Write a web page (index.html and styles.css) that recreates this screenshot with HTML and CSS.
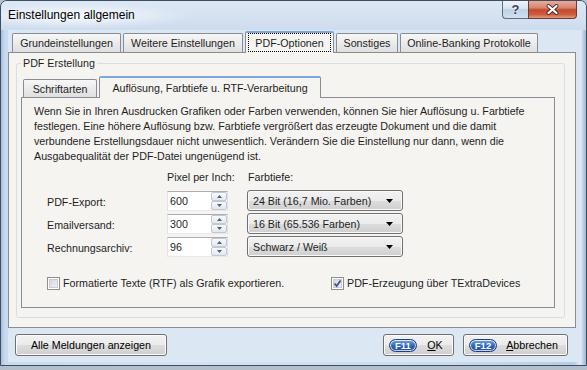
FILE: index.html
```html
<!DOCTYPE html>
<html lang="de">
<head>
    <meta charset="UTF-8">
    <meta name="viewport" content="width=device-width, initial-scale=1.0">
    <title>Einstellungen allgemein</title>
    <link rel="stylesheet" href="styles.css">
</head>
<body>

    <div class="window">
        <!-- Title bar -->
        <div class="titlebar">
            <span class="title">Einstellungen allgemein</span>
            <div class="caption-buttons">
                <span class="cap-btn cap-help">?</span>
                <span class="cap-btn cap-close">
                    <svg width="13" height="11" viewBox="0 0 13 11">
                        <path d="M2.5 2 L10.5 9 M10.5 2 L2.5 9" stroke="#4a2620" stroke-width="3.8" stroke-linecap="round"/>
                        <path d="M2.5 2 L10.5 9 M10.5 2 L2.5 9" stroke="#fff" stroke-width="2.2" stroke-linecap="round"/>
                    </svg>
                </span>
            </div>
        </div>

        <div class="client">
            <!-- Main tabs -->
            <div class="tab-strip main-tabs">
                <div class="tab tab-basic">Grundeinstellungen</div>
                <div class="tab tab-more">Weitere Einstellungen</div>
                <div class="tab tab-pdf active"><span class="focus">PDF-Optionen</span></div>
                <div class="tab tab-misc">Sonstiges</div>
                <div class="tab tab-banking">Online-Banking Protokolle</div>
            </div>

            <div class="tab-page">
                <fieldset class="group">
                    <legend>PDF Erstellung</legend>

                    <!-- Inner tabs -->
                    <div class="tab-strip sub-tabs">
                        <div class="tab tab-fonts">Schriftarten</div>
                        <div class="tab tab-resolution active">Auflösung, Farbtiefe u. RTF-Verarbeitung</div>
                    </div>

                    <div class="sub-page">
                        <p class="intro">Wenn Sie in Ihren Ausdrucken Grafiken oder Farben verwenden, können Sie hier Auflösung u. Farbtiefe<br>
                        festlegen. Eine höhere Auflösung bzw. Farbtiefe vergrößert das erzeugte Dokument und die damit<br>
                        verbundene Erstellungsdauer nicht unwesentlich. Verändern Sie die Einstellung nur dann, wenn die<br>
                        Ausgabequalität der PDF-Datei ungenügend ist.</p>

                        <div class="params">
                            <span></span>
                            <span class="head">Pixel per Inch:</span>
                            <span class="head head-depth">Farbtiefe:</span>

                            <span class="label">PDF-Export:</span>
                            <div class="spin">
                                <span class="spin-value">600</span>
                                <div class="spin-buttons">
                                    <span class="spin-btn"><svg width="5" height="3" viewBox="0 0 5 3"><polygon points="0,3 5,3 2.5,0" fill="#4d6185"/></svg></span>
                                    <span class="spin-btn"><svg width="5" height="3" viewBox="0 0 5 3"><polygon points="0,0 5,0 2.5,3" fill="#4d6185"/></svg></span>
                                </div>
                            </div>
                            <div class="combo">
                                <span>24 Bit (16,7 Mio. Farben)</span>
                                <svg width="7" height="4" viewBox="0 0 7 4"><polygon points="0,0 7,0 3.5,4" fill="#000"/></svg>
                            </div>

                            <span class="label">Emailversand:</span>
                            <div class="spin">
                                <span class="spin-value">300</span>
                                <div class="spin-buttons">
                                    <span class="spin-btn"><svg width="5" height="3" viewBox="0 0 5 3"><polygon points="0,3 5,3 2.5,0" fill="#4d6185"/></svg></span>
                                    <span class="spin-btn"><svg width="5" height="3" viewBox="0 0 5 3"><polygon points="0,0 5,0 2.5,3" fill="#4d6185"/></svg></span>
                                </div>
                            </div>
                            <div class="combo">
                                <span>16 Bit (65.536 Farben)</span>
                                <svg width="7" height="4" viewBox="0 0 7 4"><polygon points="0,0 7,0 3.5,4" fill="#000"/></svg>
                            </div>

                            <span class="label">Rechnungsarchiv:</span>
                            <div class="spin">
                                <span class="spin-value">96</span>
                                <div class="spin-buttons">
                                    <span class="spin-btn"><svg width="5" height="3" viewBox="0 0 5 3"><polygon points="0,3 5,3 2.5,0" fill="#4d6185"/></svg></span>
                                    <span class="spin-btn"><svg width="5" height="3" viewBox="0 0 5 3"><polygon points="0,0 5,0 2.5,3" fill="#4d6185"/></svg></span>
                                </div>
                            </div>
                            <div class="combo">
                                <span>Schwarz / Weiß</span>
                                <svg width="7" height="4" viewBox="0 0 7 4"><polygon points="0,0 7,0 3.5,4" fill="#000"/></svg>
                            </div>
                        </div>

                        <div class="options">
                            <label class="option">
                                <span class="check"></span>
                                Formatierte Texte (RTF) als Grafik exportieren.
                            </label>
                            <label class="option">
                                <span class="check checked">
                                    <svg width="9" height="9" viewBox="0 0 9 9"><path d="M1.5 4.5 L3.6 7 L7.6 1.5" fill="none" stroke="#3b4f92" stroke-width="1.7"/></svg>
                                </span>
                                PDF-Erzeugung über TExtraDevices
                            </label>
                        </div>
                    </div>
                </fieldset>
            </div>

            <!-- Footer buttons -->
            <div class="footer">
                <button class="btn btn-messages">Alle Meldungen anzeigen</button>
                <div class="footer-right">
                    <button class="btn btn-key btn-ok"><span class="key">F11</span><span class="btn-label"><u>O</u>K</span></button>
                    <button class="btn btn-key btn-cancel"><span class="key">F12</span><span class="btn-label"><u>A</u>bbrechen</span></button>
                </div>
            </div>
        </div>
    </div>

</body>
</html>
```

FILE: styles.css
```css
* {
    box-sizing: border-box;
}

body {
    margin: 0;
    width: 587px;
    height: 370px;
    overflow: hidden;
    background: #b4bfcc;
    font-family: "Liberation Sans", Arial, sans-serif;
    font-size: 10.7px;
    color: #1e1e1e;
}

/* Window frame */
.window {
    height: 366px;
    display: flex;
    flex-direction: column;
    border: 1px solid #3f4d5f;
    border-radius: 7px 7px 0 0;
    background: linear-gradient(90deg, #a6bfdd 0, #c8daee 4px, #d4e2f3 30%, #cbdcf0 75%, #b8cde7 98%, #e3edf8 99%, #9cb6d6 100%);
}

.titlebar {
    height: 29px;
    flex-shrink: 0;
    display: flex;
    justify-content: space-between;
    align-items: flex-start;
    border-radius: 6px 6px 0 0;
    background:
        radial-gradient(ellipse 120px 13px at 72px 15px, rgba(255, 255, 255, 0.85), rgba(255, 255, 255, 0)),
        linear-gradient(#dde8f5, #cddcee);
}

.title {
    margin: 6px 0 0 7px;
    font-size: 12px;
    line-height: 16px;
    color: #000;
}

.caption-buttons {
    display: flex;
    margin-right: 9px;
}

.cap-btn {
    height: 18px;
    display: flex;
    align-items: center;
    justify-content: center;
    border: 1px solid #5e6e84;
    border-top: none;
}

.cap-help {
    width: 26px;
    border-right: none;
    border-radius: 0 0 0 4px;
    background: linear-gradient(#eef3f9, #d8e3f0 45%, #bfd0e4 50%, #d0e0f1);
    color: #34445c;
    font-size: 13px;
    font-weight: bold;
    text-shadow: 0 0 3px #fff;
}

.cap-close {
    width: 49px;
    border-color: #6a3b35;
    border-radius: 0 0 4px 0;
    background: linear-gradient(#e9ab9a, #d88571 40%, #c2492e 52%, #cf5e3f 80%, #e59c7e);
}

/* Client area */
.client {
    flex: 1;
    margin: 0 8px 3px 7px;
    display: flex;
    flex-direction: column;
    background: #dce7f4;
}

/* Tabs */
.tab-strip {
    display: flex;
    align-items: flex-end;
    flex-shrink: 0;
}

.main-tabs {
    height: 22px;
    padding-left: 4px;
}

.tab {
    display: flex;
    align-items: center;
    justify-content: center;
    height: 19px;
    margin-right: 2px;
    border: 1px solid #898c95;
    border-bottom: none;
    border-radius: 2px 2px 0 0;
    background: linear-gradient(#f7f7f7, #ebebeb 50%, #dfdfdf);
    white-space: nowrap;
}

.tab.active {
    position: relative;
    z-index: 1;
    height: 22px;
    margin-bottom: -1px;
    border-top: 2px solid #7aa8da;
    background: #f5f4f1;
}

.tab-basic { width: 109px; }
.tab-more { width: 120px; }
.tab-pdf { width: 89px; }
.tab-misc { width: 62px; }
.tab-banking { width: 138px; }

.focus {
    align-self: stretch;
    flex: 1;
    display: flex;
    align-items: center;
    justify-content: center;
    margin: 0 2px 1px;
    border: 1px dotted #000;
}

.tab-page {
    height: 276px;
    margin-right: 2px;
    padding: 3px 10px 9px 7px;
    border: 1px solid #898c95;
    background: #f5f4f1;
}

/* Group box */
.group {
    margin: 0;
    min-width: 0;
    padding: 5px 9px 9px 4px;
    border: 1px solid #d5dfe5;
    border-radius: 3px;
}

.group legend {
    padding: 0 2px;
    line-height: 15px;
}

.sub-tabs {
    height: 21px;
    padding-left: 2px;
}

.sub-tabs .tab {
    height: 18px;
}

.sub-tabs .tab.active {
    height: 22px;
}

.tab-fonts { width: 74px; }
.tab-resolution { width: 222px; }

.sub-page {
    height: 211px;
    padding: 6px 0 0 12px;
    border: 1px solid #898c95;
    background: #f5f4f1;
}

.intro {
    margin: 0;
    line-height: 15px;
}

/* Resolution / colour depth grid */
.params {
    display: grid;
    grid-template-columns: 120px 80px 156px;
    grid-template-rows: 18px 21px 21px 21px;
    row-gap: 2px;
    margin: 6px 0 0 13px;
    align-items: center;
}

.params .head {
    align-self: start;
    line-height: 15px;
}

.head-depth {
    padding-left: 1px;
}

.label {
    padding-top: 2px;
}

.spin {
    display: flex;
    align-items: center;
    justify-content: space-between;
    width: 61px;
    height: 20px;
    padding: 0 0 0 2px;
    border: 1px solid;
    border-color: #abadb3 #dbdfe6 #e3e9ef #e2e3ea;
    background: #fff;
}

.spin-buttons {
    display: flex;
    flex-direction: column;
    width: 16px;
    height: 18px;
}

.spin-btn {
    flex: 1;
    display: flex;
    align-items: center;
    justify-content: center;
    border: 1px solid #c2c8d1;
    border-radius: 2px;
    background: linear-gradient(#f8f9fb, #e3e7ed);
}

.combo {
    display: flex;
    align-items: center;
    justify-content: space-between;
    height: 21px;
    padding: 0 9px 0 5px;
    border: 1px solid #707070;
    border-radius: 3px;
    background: linear-gradient(#f2f2f2, #ebebeb 50%, #dddddd 51%, #cfcfcf);
    box-shadow: inset 0 0 0 1px #fafafa;
    white-space: nowrap;
}

/* Checkboxes */
.options {
    display: flex;
    margin: 18px 0 0 13px;
    line-height: 16px;
}

.option {
    display: flex;
    align-items: center;
    gap: 3px;
}

.option:first-child {
    width: 284px;
}

.check {
    width: 13px;
    height: 13px;
    display: flex;
    align-items: center;
    justify-content: center;
    border: 1px solid #8e8f8f;
    background: linear-gradient(135deg, #cdd1d6, #f7f7f7);
    box-shadow: inset 0 0 0 1px #fff, inset 0 0 0 2px #c9ccd1;
}

/* Footer */
.footer {
    flex: 1;
    display: flex;
    justify-content: space-between;
    align-items: flex-start;
    padding: 6px 10px 0 7px;
}

.footer-right {
    display: flex;
    gap: 9px;
}

.btn {
    height: 22px;
    padding: 0;
    border: 1px solid #707070;
    border-radius: 3px;
    background: linear-gradient(#f2f2f2, #ebebeb 50%, #dddddd 51%, #cfcfcf);
    box-shadow: inset 0 0 0 1px #fcfcfc;
    font: inherit;
    color: #000;
}

.btn-messages { width: 152px; }
.btn-ok { width: 71px; }
.btn-cancel { width: 105px; }

.btn-key {
    display: flex;
    align-items: center;
    padding-left: 5px;
}

.key {
    width: 28px;
    height: 13px;
    display: flex;
    align-items: center;
    justify-content: center;
    border: 1px solid #1d3f7a;
    border-radius: 7px;
    background: linear-gradient(#7aa6e4, #2f63bd 55%, #1f4ea2);
    box-shadow: inset 0 0 0 1px rgba(255, 255, 255, 0.75);
    color: #fff;
    font-size: 9.5px;
    font-weight: bold;
}

.btn-label {
    flex: 1;
    text-align: center;
}
```
